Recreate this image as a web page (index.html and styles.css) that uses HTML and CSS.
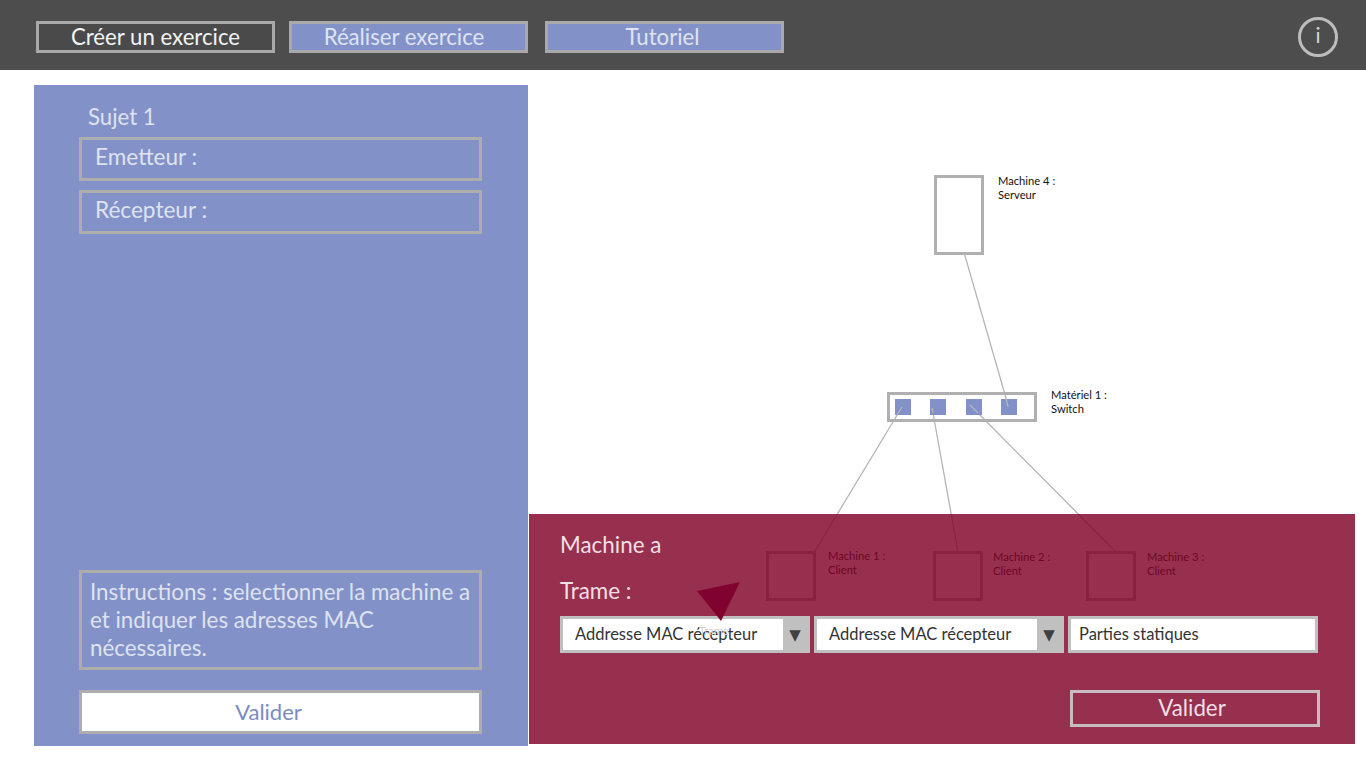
FILE: index.html
```html
<!DOCTYPE html>
<html lang="fr">
<head>
<meta charset="utf-8">
<title>Réaliser exercice</title>
<link rel="stylesheet" href="styles.css">
</head>
<body>
<header class="topbar">
  <nav class="nav">
    <a class="nav-btn nav-create">Créer un exercice</a>
    <a class="nav-btn nav-do">Réaliser exercice</a>
    <a class="nav-btn nav-tuto">Tutoriel</a>
  </nav>
  <div class="info">i</div>
</header>
<main class="main">
  <section class="subject">
    <h2 class="subject-title">Sujet 1</h2>
    <div class="field field-first">Emetteur :</div>
    <div class="field field-second">Récepteur :</div>
    <p class="instructions">Instructions : selectionner la machine a et indiquer les adresses MAC nécessaires.</p>
    <button class="validate-light">Valider</button>
  </section>
  <section class="stage">
    <svg class="links" width="838" height="698" viewBox="528 70 838 698">
      <path d="M964.5 254 1006 398M902 407 815 551M933 413 958 552M970 405 1115 551"/>
    </svg>
    <div class="node server"></div>
    <div class="label label-server">Machine 4 :<br>Serveur</div>
    <div class="node switch">
      <span class="port"></span><span class="port"></span><span class="port"></span><span class="port"></span>
    </div>
    <svg class="links links-top" width="838" height="698" viewBox="528 70 838 698">
      <path d="M902 407 897 415M933 413 932 408M970 405 978 413M1006 398 1008 407"/>
    </svg>
    <div class="label label-switch">Matériel 1 :<br>Switch</div>
    <div class="node client client-1"></div>
    <div class="label label-1">Machine 1 :<br>Client</div>
    <div class="node client client-2"></div>
    <div class="label label-2">Machine 2 :<br>Client</div>
    <div class="node client client-3"></div>
    <div class="label label-3">Machine 3 :<br>Client</div>
    <div class="sheet">
      <h3 class="sheet-title">Machine a</h3>
      <h3 class="sheet-sub">Trame :</h3>
      <div class="frame">
        <div class="select"><span class="select-text">Addresse MAC récepteur</span><span class="select-arrow">▼</span></div>
        <div class="select"><span class="select-text">Addresse MAC récepteur</span><span class="select-arrow">▼</span></div>
        <div class="static">Parties statiques</div>
      </div>
      <div class="sheet-actions"><button class="validate-dark">Valider</button></div>
      <span class="ghost">Trame</span>
      <svg class="pointer" width="44" height="40" viewBox="0 0 44 40"><polygon points="0,9 43,0 24,39"/></svg>
    </div>
  </section>
</main>
</body>
</html>
```
FILE: styles.css
```css
* { box-sizing: border-box; }
html, body { margin: 0; height: 100%; }
body {
  width: 1366px;
  height: 768px;
  overflow: hidden;
  background: #fff;
  font-family: Lato, "Open Sans", sans-serif;
}
.topbar {
  height: 70px;
  background: #4d4d4d;
  display: flex;
  align-items: center;
  justify-content: space-between;
  padding: 0 28px 0 36px;
}
.nav { display: flex; margin-top: 3px; }
.nav-btn {
  width: 239px;
  height: 32px;
  border: 3px solid #a9a9a9;
  color: #dfe3f2;
  font-size: 22.2px;
  line-height: 25px;
  text-align: center;
  background: #8292c9;
}
.nav-create { background: #4a4a4a; color: #f4f4f4; margin-right: 14px; }
.nav-do { margin-right: 17px; padding-right: 9px; }
.nav-tuto { padding-right: 4px; }
.info {
  width: 40px;
  height: 40px;
  border: 3px solid #bdbdbd;
  border-radius: 50%;
  color: #d8d8d8;
  font-size: 21px;
  line-height: 30px;
  text-align: center;
  margin-top: 3px;
}
.main { display: flex; padding: 15px 0 0 34px; }
.subject {
  width: 494px;
  height: 661px;
  flex: none;
  background: #8292c9;
  color: #dfe2ef;
  padding: 0 46px 12px 45px;
  display: flex;
  flex-direction: column;
}
.subject-title {
  margin: 20px 0 8px 9px;
  font-size: 22.2px;
  line-height: 24px;
  font-weight: 400;
}
.field {
  height: 44px;
  border: 3px solid #adadad;
  font-size: 22.6px;
  line-height: 34px;
  padding-left: 13px;
}
.field-second { margin-top: 9px; }
.instructions {
  margin: auto 0 20px;
  height: 100px;
  border: 3px solid #adadad;
  padding: 5px 8px;
  font-size: 22.35px;
  line-height: 28px;
  color: #dfe2ef;
}
.validate-light {
  height: 44px;
  border: 3px solid #adadad;
  background: #fff;
  color: #7a8bc3;
  font: 400 22px/34px Lato, sans-serif;
  padding: 0 24px 0 0;
}
.stage { position: relative; flex: 1; height: 698px; margin-top: -15px; }
.links { position: absolute; left: 0; top: 0; }
.links path { fill: none; stroke: #b5b5b5; stroke-width: 1.3; }
.node { position: absolute; border: 3px solid #b0b0b0; }
.server { left: 406px; top: 105px; width: 50px; height: 80px; }
.switch {
  left: 359px;
  top: 322px;
  width: 150px;
  height: 30px;
  display: flex;
  gap: 19.3px;
  padding: 4px 0 0 5px;
}
.port { width: 16px; height: 16px; background: #8292c9; flex: none; }
.client { width: 50px; height: 50px; }
.client-1 { left: 238px; top: 481px; }
.client-2 { left: 405px; top: 481px; }
.client-3 { left: 558px; top: 481px; }
.label {
  position: absolute;
  font-size: 11.2px;
  line-height: 14px;
  color: #111;
  white-space: nowrap;
}
.label-server { left: 470px; top: 104px; }
.label-switch { left: 523px; top: 318px; }
.label-1 { left: 300px; top: 479px; }
.label-2 { left: 465px; top: 480px; }
.label-3 { left: 619px; top: 480px; }
.sheet {
  position: absolute;
  left: 1px;
  top: 444px;
  width: 826px;
  height: 230px;
  background: rgba(128, 3, 39, .82);
  padding: 18px 0 0 31px;
  color: #f0dfe4;
}
.sheet-title, .sheet-sub { margin: 0; font-weight: 400; font-size: 22.4px; line-height: 26px; }
.sheet-sub { margin-top: 20px; }
.frame { display: flex; gap: 4px; margin-top: 12px; }
.select, .static {
  width: 250px;
  height: 37px;
  border: 3px solid #c0c0c0;
  background: #fff;
  color: #333;
  font-size: 16.5px;
  line-height: 31px;
  display: flex;
}
.select-text { flex: 1; padding-left: 12px; }
.select-arrow {
  width: 24px;
  background: #c0c0c0;
  color: #404040;
  font: 15px/33px "DejaVu Sans", sans-serif;
  text-align: center;
}
.static { padding-left: 8px; }
.sheet-actions { margin: 37px 0 0 510px; }
.validate-dark {
  display: block;
  width: 250px;
  height: 37px;
  border: 3px solid #c9bcc1;
  background: transparent;
  color: #f0dfe4;
  font: 400 22.3px/27px Lato, sans-serif;
  padding: 0 6px 2px 0;
}
.ghost {
  position: absolute;
  left: 170px;
  top: 110px;
  font-size: 11px;
  line-height: 14px;
  color: #d2d2d2;
}
.pointer { position: absolute; left: 168px; top: 68px; }
.pointer polygon { fill: #80032f; }
```
